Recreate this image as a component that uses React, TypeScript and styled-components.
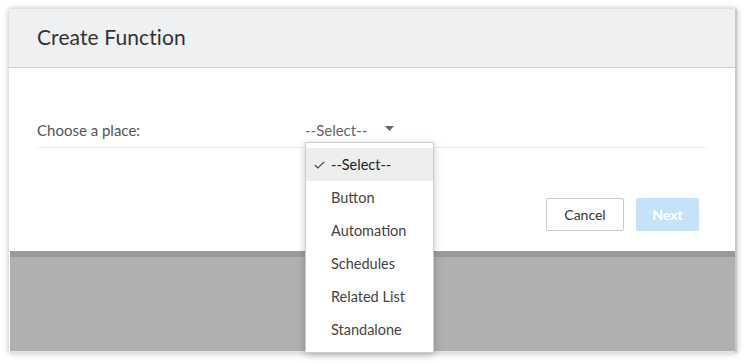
import React from "react";
import styled, { createGlobalStyle } from "styled-components";

const Global = createGlobalStyle`
  html, body { margin: 0; padding: 0; background: #ffffff; }
  body { font-family: Lato, "Open Sans", "Liberation Sans", sans-serif; }
  * { box-sizing: border-box; }
`;

const Page = styled.div`
  width: 747px;
  height: 363px;
  padding: 9px 10px 10px 9px;
  background: #ffffff;
`;

const Window = styled.div`
  position: relative;
  width: 728px;
  height: 344px;
  display: flex;
  flex-direction: column;
  box-shadow: 0 0 6px rgba(0, 0, 0, 0.28);
  border-right: 2px solid #c8c8c8;
  background: #ffffff;
`;

const Header = styled.div`
  height: 59px;
  flex: none;
  display: flex;
  align-items: center;
  padding: 0 0 4px 28px;
  background: #eff0f2;
  border-bottom: 1px solid #cfd0d2;
`;

const Title = styled.h1`
  margin: 0;
  font-size: 21px;
  font-weight: 400;
  color: #333333;
  letter-spacing: 0.1px;
`;

const Body = styled.div`
  flex: none;
  height: 183px;
  padding: 43px 28px 0 28px;
  display: flex;
  flex-direction: column;
`;

const FieldRow = styled.div`
  height: 37px;
  display: grid;
  grid-template-columns: 268px 1fr;
  align-items: center;
  border-bottom: 1px solid #ececec;
  padding-top: 1px;
`;

const Label = styled.span`
  font-size: 15px;
  color: #555555;
`;

const SelectBox = styled.div`
  position: relative;
  display: flex;
  align-items: center;
  gap: 18px;
  font-size: 15px;
  color: #666666;
`;

const Caret = styled.svg`
  width: 9px;
  height: 5px;
  margin-top: -2px;
`;

const Menu = styled.ul`
  position: absolute;
  top: 21px;
  left: 0;
  width: 129px;
  margin: 0;
  padding: 5px 0 6px;
  list-style: none;
  background: #ffffff;
  border: 1px solid #cccccc;
  box-shadow: 0 2px 8px rgba(0, 0, 0, 0.22);
  z-index: 5;
`;

const MenuItem = styled.li<{ $active?: boolean }>`
  height: 33px;
  display: flex;
  align-items: center;
  padding-left: 25px;
  position: relative;
  font-size: 14.5px;
  color: ${(p) => (p.$active ? "#222222" : "#444444")};
  background: ${(p) => (p.$active ? "#eeeeee" : "transparent")};
`;

const Check = styled.svg`
  position: absolute;
  left: 8px;
  top: 13px;
  width: 11px;
  height: 8px;
`;

const Footer = styled.div`
  margin-top: 50px;
  display: flex;
  justify-content: flex-end;
  gap: 12px;
  padding-right: 8px;
`;

const Button = styled.button<{ $primary?: boolean }>`
  height: 33px;
  padding: 0;
  width: ${(p) => (p.$primary ? "63px" : "78px")};
  font-family: inherit;
  font-size: 14px;
  font-weight: ${(p) => (p.$primary ? 700 : 400)};
  border-radius: 2px;
  color: ${(p) => (p.$primary ? "#ffffff" : "#333333")};
  background: ${(p) => (p.$primary ? "#c5e2f8" : "#ffffff")};
  border: 1px solid ${(p) => (p.$primary ? "#c5e2f8" : "#c9c9c9")};
`;

const Backdrop = styled.div`
  flex: 1;
  margin-left: 1px;
  background: linear-gradient(#9a9a9a 0, #9a9a9a 6px, #b0b0b0 6px);
  border-bottom: 2px solid #e2e2e2;
`;

const items = ["--Select--", "Button", "Automation", "Schedules", "Related List", "Standalone"];

export default function App() {
  return (
    <Page>
      <Global />
      <Window>
        <Header>
          <Title>Create Function</Title>
        </Header>
        <Body>
          <FieldRow>
            <Label>Choose a place:</Label>
            <SelectBox>
              <span>--Select--</span>
              <Caret viewBox="0 0 9 5">
                <path d="M0 0 L9 0 L4.5 5 Z" fill="#666666" />
              </Caret>
              <Menu>
                {items.map((it, i) => (
                  <MenuItem key={it} $active={i === 0}>
                    {i === 0 && (
                      <Check viewBox="0 0 11 8">
                        <path d="M0.8 4 L3.8 7 L10.2 0.8" fill="none" stroke="#444444" strokeWidth="1.1" />
                      </Check>
                    )}
                    {it}
                  </MenuItem>
                ))}
              </Menu>
            </SelectBox>
          </FieldRow>
          <Footer>
            <Button>Cancel</Button>
            <Button $primary>Next</Button>
          </Footer>
        </Body>
        <Backdrop />
      </Window>
    </Page>
  );
}
